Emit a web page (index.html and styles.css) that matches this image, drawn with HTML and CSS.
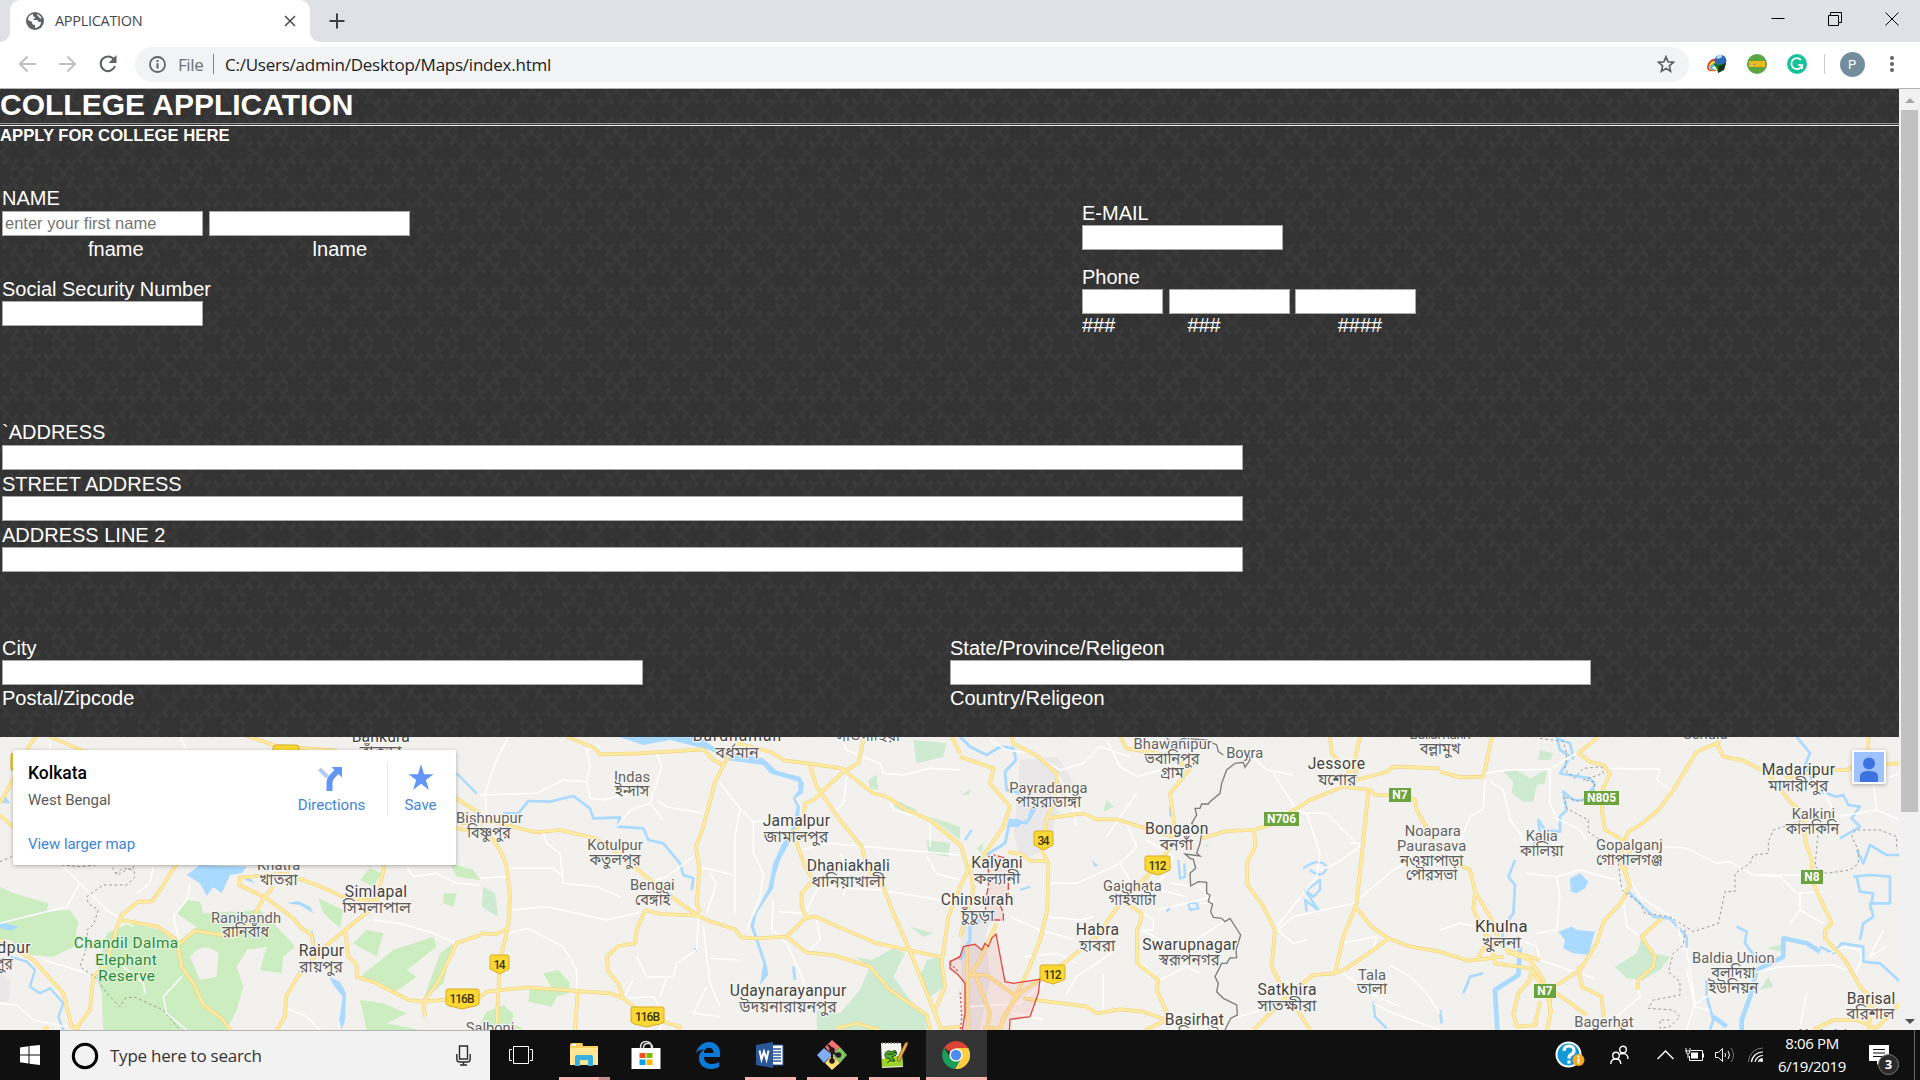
FILE: index.html
```html
<!DOCTYPE html>
<html lang="en">
<head>
<meta charset="utf-8">
<title>APPLICATION</title>
<link rel="stylesheet" href="styles.css">
</head>
<body>
<div class="screen">
<header class="tabstrip">
  <div class="tab">
    <svg class="globe" width="18" height="18" viewBox="0 0 18 18"><circle cx="9" cy="9" r="9" fill="#5f6368"/><path d="M2 8c0-3 2-5.500 5-6v2c0 1 2 0 2 2 0 1-2 1-2 2h4c1 0 1 2 2 2h2c0 3-3 6-6 6v-3c-2 0-3-1-3-3L2 8zM11 2c2 1 4 2 4.500 4-1 1-2 0-2.500-1s-2-1-2-3z" fill="#fff"/></svg>
    <span class="tab-title">APPLICATION</span>
    <svg width="12" height="12" viewBox="0 0 12 12"><path d="M1 1l10 10M11 1L1 11" stroke="#4b4f53" stroke-width="1.600"/></svg>
  </div>
  <svg class="newtab" width="16" height="16" viewBox="0 0 16 16"><path d="M8 .5v15M.5 8h15" stroke="#3c4043" stroke-width="2"/></svg>
  <div class="window-buttons">
    <svg width="14" height="14" viewBox="0 0 14 14"><path d="M.5 6.500h13" stroke="#000"/></svg>
    <svg width="14" height="14" viewBox="0 0 14 14"><path d="M.5 3.500h10v10H.5zM2.500 3V.5h11v10H11" fill="none" stroke="#000"/></svg>
    <svg width="14" height="14" viewBox="0 0 14 14"><path d="M.5 .5l13 13M13.500 .5l-13 13" stroke="#000"/></svg>
  </div>
</header>
<nav class="toolbar">
  <svg class="nav-icon" width="18" height="18" viewBox="0 0 18 18"><path d="M17 9H1M8.500 1.500L1 9l7.500 7.500" fill="none" stroke="#bdbfc1" stroke-width="2"/></svg>
  <svg class="nav-icon" width="18" height="18" viewBox="0 0 18 18"><path d="M0 9h16M8.500 1.500L16 9l-7.500 7.500" fill="none" stroke="#bdbfc1" stroke-width="2"/></svg>
  <svg class="nav-icon" width="18" height="18" viewBox="0 0 18 18"><path d="M15 4.500A7.300 7.300 0 1 0 16 11" fill="none" stroke="#5f6368" stroke-width="2.100"/><path d="M17.500 0v8h-8z" fill="#5f6368"/></svg>
  <div class="omnibox">
    <svg width="17" height="17" viewBox="0 0 17 17"><circle cx="8.500" cy="8.500" r="7.500" fill="none" stroke="#5f6368" stroke-width="1.800"/><path d="M8.500 7.300v5.200M8.500 4v2" stroke="#5f6368" stroke-width="2"/></svg>
    <span class="scheme">File</span><span class="scheme-rule"></span><span class="url">C:/Users/admin/Desktop/Maps/index.html</span>
    <svg class="star" width="18" height="18" viewBox="0 0 18 18"><path d="M9 1.800l2.100 5 5.400.5-4.100 3.600 1.200 5.300L9 13.400l-4.600 2.800 1.200-5.300L1.500 7.300l5.400-.5z" fill="none" stroke="#5f6368" stroke-width="1.700"/></svg>
  </div>
  <div class="extensions">
    <svg width="20" height="20" viewBox="0 0 20 20"><path d="M0 13C1 7 5 4 10 5l-1 12C4 18 0 17 0 13z" fill="#e23b2e"/><path d="M1.500 13C3 8 6 6 10 7l-1 9c-4 1-7 0-7.500-3z" fill="#f6dd3a"/><path d="M3 13.500c1-3 3-4 6-4l-1 6c-3 1-5 0-5-2z" fill="#5aa8e8"/><path d="M5 13.500q2-2 4-1.500v3q-3 1-4-1.500z" fill="#f4f4f4"/><circle cx="13.500" cy="6.800" r="6" fill="#2f68b5"/><path d="M9 4c1-3 4-4 6-3 1 2-3 5-6 3z" fill="#b6dbfa"/><path d="M6 9l7 2 6-2-2 6-6 4-1-4z" fill="#0b7d19"/><path d="M12 12l7-3-2 7-6 3z" fill="#15331a"/></svg>
    <svg width="20" height="20" viewBox="0 0 20 20"><circle cx="10" cy="10" r="10" fill="#5da443"/><path d="M2 7h16v6H2z" fill="#f1b719"/><path d="M4 11.500l4-2 1-1v2l-2 1zM16.500 7v6" fill="#7a5a20" stroke="#e7d8a0" stroke-width=".6"/></svg>
    <svg width="20" height="20" viewBox="0 0 20 20"><circle cx="10" cy="10" r="10" fill="#15c39a"/><path d="M14 6a5.500 5.500 0 1 0 1.200 5H11m4.200 0v4" fill="none" stroke="#fff" stroke-width="1.700"/></svg>
    <span class="ext-rule"></span>
    <span class="avatar">P</span>
    <svg width="4" height="18" viewBox="0 0 4 18"><g fill="#5f6368"><circle cx="2" cy="3" r="2"/><circle cx="2" cy="9" r="2"/><circle cx="2" cy="15" r="2"/></g></svg>
  </div>
</nav>
<div class="viewport">
<main class="page">
  <h1 class="title">COLLEGE APPLICATION</h1>
  <hr class="rule">
  <h5 class="subtitle">APPLY FOR COLLEGE HERE</h5>
  <section class="personal">
    <div class="identity">
      <label class="label raised">NAME</label>
      <div class="fields name-fields"><input class="w-std" placeholder="enter your first name"><input class="w-std"></div>
      <div class="hints name-hints"><span>fname</span><span>lname</span></div>
      <label class="label ssn">Social Security Number</label>
      <div class="fields"><input class="w-std"></div>
    </div>
    <div class="contact">
      <label class="label">E-MAIL</label>
      <div class="fields"><input class="w-std"></div>
      <label class="label phone">Phone</label>
      <div class="fields phone-fields"><input class="w-area"><input class="w-part"><input class="w-part"></div>
      <div class="hints phone-hints"><span>###</span><span>###</span><span>####</span></div>
    </div>
  </section>
  <section class="address">
    <label class="label">`ADDRESS</label><input class="w-line">
    <label class="label spaced">STREET ADDRESS</label><input class="w-line">
    <label class="label spaced">ADDRESS LINE 2</label><input class="w-line">
  </section>
  <section class="region">
    <div class="region-col"><label class="label">City</label><input class="w-half"><label class="label after">Postal/Zipcode</label></div>
    <div class="region-col"><label class="label">State/Province/Religeon</label><input class="w-half"><label class="label after">Country/Religeon</label></div>
  </section>
  <section class="map">
  <svg class="map-canvas" width="1899" height="293" viewBox="0 737 1899 293">
    <defs>
      <g id="roads">
        <g transform="translate(0 730) scale(.33333)">
          <path d="M150 20L290 80M115 10Q80 50 60 110L0 220M0 255L50 300M690 0L830 48L1010 62M530 400L487 470L455 515L415 515L365 555L345 610L320 700L280 740L270 840L225 900M362 570L475 590L530 630L545 710L580 760L610 825L665 865L690 900M530 650L585 602L665 615L750 580L790 505L820 470M870 430L720 443L718 465L800 505L880 565L900 590L935 615L940 645M880 440L950 465L1040 505L1130 512L1155 400M1110 540L1035 600L975 650L905 720L858 800L855 860L830 900M1035 600L1045 680L1070 705L1070 740L1130 760L1225 810L1270 815L1440 800M1275 860L1270 815L1315 755L1370 640L1440 615M0 630L100 690L190 790L215 890L240 895M130 900L145 890M1360 200L1440 250M1350 290L1440 310"/>
        </g>
        <g transform="translate(480 730) scale(.33333)">
          <path d="M260 20L340 52L360 73L480 70L670 58L700 90L730 105M750 70L705 155L670 290L648 350L658 420L650 520L660 548M0 290Q60 340 80 410L90 500L85 590L60 690L50 880M-60 280L40 275L165 307L240 300L345 325L400 360L480 425L560 490L650 555L685 572L765 598L785 622L830 625L920 620L975 565L1005 560L1190 640L1385 682M495 540L540 552L660 557M495 540L470 600L465 640L415 648L380 680L385 725L415 760L430 805L390 790L140 772L20 785L-10 810M430 805L500 860L600 890L595 900M0 610L50 612L85 595M293 785L285 900M770 40L870 65L915 92L985 100L1085 115L1180 190L1220 200L1280 240L1350 270L1440 345M1150 30L1135 100L1090 125L1000 210L975 220L970 270L940 310L975 410L1000 450L965 490L965 530L980 565M990 105L1010 170L1080 270L1145 350L1165 420L1210 470L1240 550L1280 640L1325 750L1385 900M920 620L980 668L1060 675L1170 710L1230 780L1340 855L1350 900M1415 20L1440 70M1070 895L1130 880L1200 900M1440 470L1405 560L1385 700L1395 770L1365 840M1385 895L1440 890"/>
        </g>
        <g transform="translate(960 730) scale(.33333)">
          <path d="M0 80L100 115L90 160L150 230L130 290L75 370L25 420L0 340M155 20L160 40L235 80L290 130L290 180L260 270L245 360L265 400L262 540L240 630L205 720L150 830L115 900M260 265L370 250L410 268L470 268L555 295L640 320M145 365L190 375L210 393L260 393M480 20L500 55L620 75L690 115L630 190L645 300M640 340L570 430L480 520L410 620L305 705M500 520L545 550L540 580L530 600L532 700L595 750L590 780L630 870M190 805L380 830L410 850L480 838L550 845L620 870L555 900M310 700L180 790L130 860L120 900M725 325L800 303L880 300L930 285L1050 210L1150 170L1230 180L1245 195L1330 195L1365 210L1370 240L1420 330M1110 20L1115 70L1190 150M1200 20L1185 85L1190 150L1280 125L1300 110L1440 115M1225 185L1190 520L1150 620L1125 730L1060 735L1000 780L940 840L880 900M1000 820L1050 900M1125 730L1160 715L1240 660L1285 625L1350 650L1440 665M1185 530L1235 590L1285 625M883 300L885 350L860 400L862 465L910 530L945 600L935 710L990 820M0 470L30 410L40 480L0 620M110 580L60 690L40 720L90 850L80 900M20 650L25 900M20 735L80 735L170 800M70 895L120 895"/>
        </g>
        <g transform="translate(1440 730) scale(.33333)">
          <path d="M0 125L60 142L130 140L140 95L155 20M475 20L415 70L450 95L490 105L510 130L490 175L485 240L495 300L550 330L540 390L570 465L545 515L490 575L470 640L420 720L350 765M555 330L565 305L600 285L655 240L700 180L770 65L830 40L850 80L910 92L985 130L1050 215L1090 250L1095 330L1115 390L1115 450L1175 580L1155 600L1155 625L1215 690L1260 770L1300 810L1285 900M835 20L835 45M1035 145L1150 120L1220 120L1245 105L1380 100M1285 20L1285 80M0 375L90 420L105 485L100 540L140 620M105 485L150 560L180 640L200 660L300 690M0 665L85 692L190 680M110 690L150 620L165 700L270 715L330 800L330 860L320 900M200 665L270 690L310 750L335 850M275 720L270 750L235 790L220 850L230 890L285 885L300 815M415 710L425 770L485 800L490 860M350 790L440 855M665 565L605 620L645 680L640 710L595 750L592 780M570 360L555 420L570 465M1300 815L1260 870L1180 870L1120 900M1250 870L1310 895L1380 820"/>
        </g>
      </g>
    </defs>
    <rect y="737" width="1899" height="293" fill="#f3f1ed"/>
    <g fill="#cbedc0">
      <g transform="translate(0 730) scale(.33333)">
        <path d="M0 470L40 490L145 520L140 545L210 540L235 575L220 650L160 680L90 675L30 630L0 630zM290 740L320 610L390 580L480 600L530 640L590 590L530 550L560 510L600 515L610 550L780 540L860 620L885 650L850 680L845 730L780 720L800 650L740 660L710 710L730 770L710 840L680 900L310 900L305 790z"/>
        <path d="M570 680Q610 630 655 670L650 740L600 750z" fill="#f3f1ed"/>
        <path d="M955 505L1030 540L1020 595L970 550zM1080 450L1110 415L1145 430L1120 470zM1330 490L1370 490L1360 530L1330 520zM1350 400L1420 420L1440 450L1370 440zM1100 600L1150 610L1130 680L1060 640zM1180 660L1300 620L1310 650L1220 720L1250 740L1180 790L1080 740zM1080 810L1150 820L1220 850L1160 880L1260 900L1100 900zM1320 670L1360 640L1330 760L1270 810z"/>
      </g>
      <g transform="translate(480 730) scale(.33333)"><path d="M190 730L235 720L270 760L265 790L230 800L215 830L145 815L150 780L215 775zM20 845L70 825L100 850L95 880L135 900L0 880z"/><path d="M10 470L45 490L55 560L5 530zM1300 30L1400 40L1390 80L1310 100zM1165 150L1190 135L1195 180L1170 175zM1260 215L1310 240L1300 255L1240 230zM1350 260L1440 290L1440 330zM1340 330L1410 340L1405 380L1345 370zM1125 680L1175 690L1240 655L1275 670L1240 740L1290 810L1340 860L1340 900L1010 900L1010 840L1080 850L1140 780L1170 710zM1340 690L1385 680L1395 770L1350 800L1320 740zM1290 590L1360 610L1330 620z" fill="#ceead0"/></g>
      <g transform="translate(960 730) scale(.33333)" fill="#ceead0"><path d="M430 245L440 210L462 230zM275 240L300 245L270 260zM5 195L35 175L25 195zM290 135L330 165L290 160zM190 300L225 270L220 310zM50 355L70 340L65 370zM735 340L748 350L738 352z"/></g>
      <g transform="translate(1440 730) scale(.33333)" fill="#ceead0"><path d="M190 125L230 120L270 145L320 120L315 160L290 165L280 215L250 215L215 190L220 155zM300 60L340 70L330 90L295 90zM525 710L590 670L605 625L640 670L690 680L660 720L610 750L560 745zM960 780L985 740L1000 770zM980 655L1035 640L1020 665z"/></g>
    </g>
    <g fill="#e9e7e7"><path d="M1020 760l38-3 15 25-15 20-8 45-30 15-6-28zM960 900l25 20 5 60-10 50h-18zM0 972l10 10-2 20H0zM975 915l20-5-10 25-15 5z"/></g>
    <g fill="#aadaff">
      <g transform="translate(0 730) scale(.33333)"><path d="M560 435L600 405L740 410L725 430L690 435L665 490L640 470L620 497L600 460zM5 220L15 195L30 220zM0 595L0 575L55 590L35 602zM740 435L765 460L735 450zM860 520L895 513L930 530L940 550L900 525zM987 740L1020 755L1038 790L1035 870L1025 900L1018 870L1028 800L1000 765zM935 595L945 630L945 660L935 640z"/></g>
      <g transform="translate(480 730) scale(.33333)"><path d="M415 20L660 22L700 50L790 75L850 85L890 122L960 140L972 160L968 190L945 205L960 230L955 285L925 345L900 390L885 440L880 475L830 550L822 590L860 705L865 735L840 765L850 700L812 590L815 570L865 475L880 400L905 345L940 285L950 230L938 205L955 180L955 155L870 130L850 105L740 90L690 60L570 30L490 45z"/></g>
      <g transform="translate(1440 730) scale(.33333)"><path d="M390 445L420 430L445 455L435 475L410 490L393 485zM355 605L395 590L410 600L465 605L445 675L400 670L370 655L375 630z"/></g>
    </g>
    <g fill="none" stroke="#aadaff" stroke-linejoin="round">
      <g transform="translate(0 730) scale(.33333)"><path stroke-width="7" d="M30 680L80 695L105 720L90 770L120 790L150 775L190 820L175 860L190 900M1370 130L1430 190"/></g>
      <g transform="translate(480 730) scale(.33333)"><path stroke-width="8" d="M70 250L115 250L145 213L210 215L280 198L330 235L340 265L420 262L412 290L490 295L505 330L550 340L600 400L610 435L640 445L635 480M940 710L945 750M645 655L650 665"/></g>
      <g transform="translate(960 730) scale(.33333)"><path stroke-width="9" d="M0 20L30 50L80 75L120 50L160 55L168 90L135 125L140 180L185 190M240 210L200 280L150 270L135 340L80 375"/><path fill="#aadaff" stroke="none" d="M145 290L165 265L195 275L215 230L225 235L175 292zM395 390L415 408L405 410z"/><path stroke-width="10" d="M60 570L30 590L30 630L0 690"/><path stroke-width="7" d="M655 390L660 445L675 440L673 400M685 518L710 520L715 535L690 540L685 520M630 230L632 260M1030 415Q1080 380 1100 410Q1090 450 1050 420M1040 480L1080 450L1080 480L1060 500L1035 480L1075 540L1035 510L1040 545M1240 815L1245 860L1280 895M180 480L210 470M620 545L632 528M15 330L35 300"/></g>
      <g transform="translate(1440 730) scale(.33333)"><path stroke-width="8" d="M350 20L360 60L400 85L390 40L350 25M385 90L360 130L450 145L465 165L430 210L400 210L370 185L380 240L360 260L360 305L315 300L295 270L300 310L270 360M225 390L205 440L225 465L220 550L190 590L185 650M560 480L600 520L640 560L690 565L740 620L740 655M1070 20L1110 70L1095 105L1130 180L1190 200L1210 195L1225 225L1260 230L1235 265L1260 290L1200 325M1380 375L1340 375L1290 345L1270 400L1250 360M1240 440L1290 435L1350 440L1350 520L1290 520L1300 560L1270 580L1260 630M1250 440L1260 485L1300 490L1290 540M890 590L920 605L915 640L960 700M810 900L820 870L800 800L800 750M1140 650L1180 670L1205 640L1270 650L1270 695L1320 700L1380 755M5 880L0 840M130 730L90 740L70 790"/><path stroke-width="14" d="M240 650L235 735L165 780L172 900M1140 665L1100 640L1030 625L1030 680L950 720L930 800L905 870L905 900M820 860L860 890"/></g>
    </g>
    <g fill="none" stroke="#fff" stroke-width="4.500" stroke-linejoin="round">
      <g transform="translate(0 730) scale(.33333)"><path d="M190 410L240 460L200 530L120 550L0 580M240 460L320 540L400 590M570 460L560 510L520 560L540 640M460 410L450 460L410 490M1220 410L1240 440L1310 430L1370 460L1440 465M1120 570L1200 580L1300 610L1370 640M130 690L200 710L290 740M0 820L50 825L100 870L200 890M850 830L920 860L960 900M560 900L500 850L490 800L545 740M370 710L430 760L435 790M540 20L560 60M150 30L150 60"/></g>
      <g transform="translate(480 730) scale(.33333)"><path d="M85 20L50 90L40 120L15 190L20 250M0 195L170 190L250 150L320 155L330 110L320 60L360 50M320 155L330 205L370 210L450 190M530 70L545 110L510 220L550 270M510 220L450 240L410 290M530 210L560 230L670 250M720 160L780 235L820 275L940 270M780 235L765 320L765 550M820 275L820 370L850 430L840 500L800 600M190 310L200 340L240 370L250 460L350 470L420 500M80 415L220 415L250 440M0 445L80 440M90 540L200 530L270 545L380 570L490 545M85 610L145 595L250 650L290 720L290 780M640 380L560 440L500 460M660 410L760 435M690 430L710 460L680 550M670 590L690 760L720 830M655 560L650 660L590 700L580 740L500 740L470 680M690 685L780 690M880 510L875 600L920 640L970 750L980 830M895 545L975 550L1000 500L1020 470L1200 480L1440 520M960 360L1050 340L1160 350L1440 375M1220 190L1240 240L1350 270L1350 350M1080 20L1100 60L1200 100L1210 130L1270 135L1350 115L1440 120M1100 140L1090 220L1060 250M1440 450L1370 430L1340 380M1080 370L1110 410L1090 500M1010 565L1020 630L980 670M460 750L430 805M540 800L560 740M440 805L520 800L550 850L540 900M680 770L640 850L720 860"/></g>
      <g transform="translate(960 730) scale(.33333)"><path d="M90 30L140 60L220 70L300 120L370 100L420 50L510 80M290 130L330 200L350 290M290 190L390 270M440 30L480 110L530 140L640 110M530 190L460 290L440 320M500 280L530 350L480 400L350 460L260 460M480 400L510 450M560 330L640 380L610 440L550 490L520 510M630 460L720 470L760 520L720 520M600 480L680 500M545 545L580 570L580 600L545 600L600 630L690 640L800 570M590 540L760 500M260 560L360 570L400 560M150 560L240 600L350 630M480 650L410 700L350 740L320 790M430 730L430 850M545 700L600 750L680 710L720 730M870 70L920 120L1000 135M940 130L1010 240L1040 250L1080 370L1070 440L950 590M1010 250L1100 250L1200 350L1130 400L1080 420M1200 340L1170 340M940 610L1000 560L1180 520L1300 420L1370 380M940 590L1000 640L1040 630M1150 730L1230 790L1320 830M1240 820L1300 850L1440 900M1240 660L1250 620L1140 640M1290 705L1350 740L1400 790L1440 850M30 830L180 820L250 760M190 680L290 670L350 700M160 850L250 870M800 870L940 830"/></g>
      <g transform="translate(1440 730) scale(.33333)"><path d="M0 20L65 35M135 150L130 235L90 260L55 350M150 155L190 180L210 270L240 310L260 370M135 130L200 120L330 118L400 75L430 60M330 120L330 220L350 265L420 300L440 330M500 115L660 118L650 150L700 185M670 350L740 355L830 400L870 395L940 435L1080 435L1120 410M560 430L600 500L660 540L710 570L730 655L740 655L765 820L740 900M550 510L560 590L600 620M260 430L350 440L420 420L530 450L550 490M350 440L360 500L350 600L290 610M240 630L290 650L300 690L460 745M0 600L60 580L120 590M940 435L1020 440L1070 490L1150 485M1080 490L1080 540L1150 580M1080 540L1050 580M770 820L890 740L1020 710L1180 705L1220 720M1100 790L1080 890M1170 670L1210 650L1260 660L1265 690L1245 730M740 720L765 830L810 840M590 750L600 800L530 860M1120 120L1190 260L1310 240L1380 270M1310 240L1300 160L1380 130M1330 600L1290 680L1340 650"/></g>
    </g>
    <use href="#roads" class="road-edge"/>
    <use href="#roads" class="road-fill"/>
    <g fill="none" stroke="#9a9a9a" stroke-width="3" stroke-dasharray="8 8">
      <path transform="translate(0 730) scale(.33333)" d="M0 395L35 380M185 405L240 410L330 400L350 435L400 410L405 440L380 465L310 465L260 500L265 520L295 540L280 585L260 600L265 640L240 710L290 745L320 790L360 830L375 805L400 800L490 840L535 895M345 430L370 415L400 420"/>
      <path transform="translate(1440 730) scale(.33333)" d="M300 25L370 35L380 70L375 120L405 145L430 115L485 110L490 130L430 150L465 155L460 190L420 215L370 200L380 235L445 270L445 305L480 330M535 400L545 480L600 520L615 550L690 560L760 605L835 580L855 485L885 485L885 430L930 400L940 375L985 370L985 335L1000 300L1090 270M1135 300L1125 410L1160 430L1230 420L1255 400L1255 360L1235 320L1245 300L1320 300L1370 320L1370 360M735 600L730 645L700 670L685 725L720 755L720 795L640 810L625 835L700 840L720 860L690 890L660 895L660 870L690 870"/>
    </g>
    <path transform="translate(960 730) scale(.33333)" d="M620 25L640 40L670 25L740 30L770 45L775 65L790 75M865 60L870 90L855 112L850 97L825 100L800 120L785 160L780 190L750 215L745 222L725 222L720 235L705 235L710 255L695 280L725 310L720 340L710 370L720 378L675 372L690 385L700 388L707 415L690 430L692 468L715 455L740 457L740 490L750 495L745 515L758 522L752 545L760 562L785 565L795 575L810 565L842 615L828 660L830 683L810 684L800 700L785 700L765 740L775 760L770 785L790 805L830 825L832 855L812 865L795 900" fill="none" stroke="#7d7d7d" stroke-width="4"/>
    <g transform="translate(960 730) scale(.33333)" stroke="#e34a41" stroke-width="4" fill="#e5534b" fill-opacity=".1">
      <path d="M85 380L105 375L150 390L165 430L145 460L145 500L115 510L130 550L130 570L80 570L75 520L85 470z" stroke-dasharray="22 7"/>
      <path d="M-30 695L0 680L10 650L45 643L65 660L75 640L85 650L95 625L108 612L135 755L160 760L240 748L235 790L210 860L150 868L148 910L5 910L15 850L15 760L-5 735L-30 715z"/>
      <path d="M-30 695L0 680M-30 700L-5 725M0 910L5 860L0 780" stroke-dasharray="6 7" fill="none"/>
    </g>
    <g class="place" transform="translate(0 730) scale(.33333)">
      <text class="town" x="1142" y="36" textLength="174">Bankura</text><text class="bn" x="1142" y="80" textLength="125" lengthAdjust="spacingAndGlyphs">বাঁকুড়া</text>
      <text class="minor" x="836" y="421" textLength="130">Khatra</text><text class="bn" x="835" y="464" textLength="115" lengthAdjust="spacingAndGlyphs">খাতরা</text>
      <text class="town" x="1128" y="501" textLength="187">Simlapal</text><text class="bn" x="1130" y="548" textLength="205" lengthAdjust="spacingAndGlyphs">সিমলাপাল</text>
      <text class="minor" x="738" y="578" textLength="210">Ranibandh</text><text class="bn" x="737" y="622" textLength="140" lengthAdjust="spacingAndGlyphs">রানিবাঁধ</text>
      <g class="park"><text x="378" y="654" textLength="313">Chandil Dalma</text><text x="378" y="704" textLength="184">Elephant</text><text x="380" y="753" textLength="170">Reserve</text></g>
      <text class="town" x="964" y="678" textLength="136">Raipur</text><text class="bn" x="963" y="725" textLength="130" lengthAdjust="spacingAndGlyphs">রায়পুর</text>
      <text class="town" x="42" y="668" textLength="100">dpur</text><text class="bn" x="0" y="718" textLength="76" lengthAdjust="spacingAndGlyphs">দপুর</text>
      <text class="minor" x="1468" y="280" textLength="200">Bishnupur</text><text class="bn" x="1467" y="324" textLength="130" lengthAdjust="spacingAndGlyphs">বিষ্ণুপুর</text>
      <text class="minor" x="1470" y="908" textLength="146">Salboni</text>
    </g>
    <g class="place" transform="translate(480 730) scale(.33333)">
      <text class="town" x="771" y="34" textLength="265">Bardhaman</text><text class="bn" x="771" y="83" textLength="130" lengthAdjust="spacingAndGlyphs">বর্ধমান</text>
      <text class="bn" x="1165" y="34" textLength="190" lengthAdjust="spacingAndGlyphs">সাতগাছিয়া</text>
      <text class="minor" x="456" y="157" textLength="108">Indas</text><text class="bn" x="456" y="199" textLength="103" lengthAdjust="spacingAndGlyphs">ইন্দাস</text>
      <text class="minor" x="405" y="361" textLength="166">Kotulpur</text><text class="bn" x="405" y="405" textLength="153" lengthAdjust="spacingAndGlyphs">কতুলপুর</text>
      <text class="minor" x="517" y="479" textLength="134">Bengai</text><text class="bn" x="518" y="524" textLength="106" lengthAdjust="spacingAndGlyphs">বেঙ্গাই</text>
      <text class="town" x="949" y="288" textLength="202">Jamalpur</text><text class="bn" x="948" y="335" textLength="194" lengthAdjust="spacingAndGlyphs">জামালপুর</text>
      <text class="town" x="1105" y="424" textLength="249">Dhaniakhali</text><text class="bn" x="1105" y="472" textLength="222" lengthAdjust="spacingAndGlyphs">ধানিয়াখালী</text>
      <text class="town" x="924" y="798" textLength="350">Udaynarayanpur</text><text class="bn" x="924" y="846" textLength="292" lengthAdjust="spacingAndGlyphs">উদয়নারায়নপুর</text>
    </g>
    <g class="place" transform="translate(960 730) scale(.33333)">
      <text class="minor" x="638" y="57" textLength="235">Bhawanipur</text><text class="bn" x="636" y="101" textLength="165" lengthAdjust="spacingAndGlyphs">ভবানিপুর</text><text class="bn" x="636" y="145" textLength="70" lengthAdjust="spacingAndGlyphs">গ্রাম</text>
      <text class="minor" x="854" y="83" textLength="111">Boyra</text>
      <text class="minor" x="265" y="188" textLength="235">Payradanga</text><text class="bn" x="265" y="232" textLength="197" lengthAdjust="spacingAndGlyphs">পায়রাডাঙ্গা</text>
      <text class="town" x="1129" y="116" textLength="172">Jessore</text><text class="bn" x="1131" y="164" textLength="116" lengthAdjust="spacingAndGlyphs">যশোর</text>
      <text class="town" x="650" y="312" textLength="190">Bongaon</text><text class="bn" x="649" y="360" textLength="100" lengthAdjust="spacingAndGlyphs">বনগাঁ</text>
      <text class="town" x="111" y="415" textLength="154">Kalyani</text><text class="bn" x="111" y="463" textLength="140" lengthAdjust="spacingAndGlyphs">কল্যানী</text>
      <text class="town" x="51" y="525" textLength="218">Chinsurah</text><text class="bn" x="53" y="573" textLength="100" lengthAdjust="spacingAndGlyphs">চুঁচুড়া</text>
      <text class="minor" x="517" y="483" textLength="176">Gaighata</text><text class="bn" x="517" y="526" textLength="143" lengthAdjust="spacingAndGlyphs">গাইঘাটা</text>
      <text class="town" x="412" y="615" textLength="130">Habra</text><text class="bn" x="412" y="662" textLength="108" lengthAdjust="spacingAndGlyphs">হাবরা</text>
      <text class="town" x="689" y="659" textLength="285">Swarupnagar</text><text class="bn" x="688" y="706" textLength="182" lengthAdjust="spacingAndGlyphs">স্বরূপনগর</text>
      <text class="town" x="981" y="795" textLength="177">Satkhira</text><text class="bn" x="981" y="843" textLength="177" lengthAdjust="spacingAndGlyphs">সাতক্ষীরা</text>
      <text class="minor" x="1236" y="749" textLength="84">Tala</text><text class="bn" x="1236" y="793" textLength="90" lengthAdjust="spacingAndGlyphs">তালা</text>
      <text class="town" x="703" y="885" textLength="178">Basirhat</text><text class="bn" x="703" y="930" textLength="150" lengthAdjust="spacingAndGlyphs">বসিরহাট</text>
      <text class="minor" x="1418" y="317" textLength="168">Noapara</text><text class="minor" x="1415" y="363" textLength="208">Paurasava</text><text class="bn" x="1415" y="407" textLength="190" lengthAdjust="spacingAndGlyphs">নওয়াপাড়া</text><text class="bn" x="1415" y="451" textLength="155" lengthAdjust="spacingAndGlyphs">পৌরসভা</text>
      <text class="minor" x="1440" y="26" textLength="185">Bollamukh</text><text class="bn" x="1440" y="73" textLength="122" lengthAdjust="spacingAndGlyphs">বল্লামুখ</text>
    </g>
    <g class="place" transform="translate(1440 730) scale(.33333)">
      <text class="minor" x="796" y="27" textLength="134">Sendia</text>
      <text class="town" x="1075" y="134" textLength="220">Madaripur</text><text class="bn" x="1075" y="182" textLength="180" lengthAdjust="spacingAndGlyphs">মাদারীপুর</text>
      <text class="minor" x="1120" y="268" textLength="130">Kalkini</text><text class="bn" x="1117" y="312" textLength="160" lengthAdjust="spacingAndGlyphs">কালকিনি</text>
      <text class="minor" x="305" y="334" textLength="96">Kalia</text><text class="bn" x="305" y="377" textLength="130" lengthAdjust="spacingAndGlyphs">কালিয়া</text>
      <text class="minor" x="568" y="361" textLength="200">Gopalganj</text><text class="bn" x="568" y="404" textLength="200" lengthAdjust="spacingAndGlyphs">গোপালগঞ্জ</text>
      <text class="big" x="184" y="605" textLength="158">Khulna</text><text class="bn" x="184" y="655" textLength="118" lengthAdjust="spacingAndGlyphs">খুলনা</text>
      <text class="minor" x="880" y="700" textLength="248">Baldia Union</text><text class="bn" x="880" y="744" textLength="132" lengthAdjust="spacingAndGlyphs">বলদিয়া</text><text class="bn" x="880" y="788" textLength="150" lengthAdjust="spacingAndGlyphs">ইউনিয়ন</text>
      <text class="town" x="1293" y="822" textLength="146">Barisal</text><text class="bn" x="1291" y="868" textLength="145" lengthAdjust="spacingAndGlyphs">বরিশাল</text>
      <text class="minor" x="492" y="891" textLength="178">Bagerhat</text><text class="bn" x="492" y="936" textLength="140" lengthAdjust="spacingAndGlyphs">বাগেরহাট</text>
      <text class="minor" x="1170" y="930" textLength="190">Nalchity</text>
    </g>
    <g class="shield">
      <rect x="273" y="745" width="26" height="20" rx="3"/><rect x="11" y="753" width="22" height="18" rx="3"/>
      <path d="M448 989h29a2 2 0 0 1 2 2v13q-4 3-9 3l-8 2-8-2q-5 0-8-3v-13a2 2 0 0 1 2-2z"/><text x="462" y="1003" textLength="25">116B</text>
      <path d="M492 955h15a2 2 0 0 1 2 2v12l-9.500 5-9.500-5v-12a2 2 0 0 1 2-2z"/><text x="499.500" y="969" textLength="12">14</text>
      <path d="M633 1007h29a2 2 0 0 1 2 2v13q-4 3-9 3l-8 2-8-2q-5 0-8-3v-13a2 2 0 0 1 2-2z"/><text x="647.500" y="1021" textLength="25">116B</text>
      <path d="M1036 831h15a2 2 0 0 1 2 2v12l-9.500 5-9.500-5v-12a2 2 0 0 1 2-2z"/><text x="1043.500" y="845" textLength="12">34</text>
      <path d="M1147 856h21a2 2 0 0 1 2 2v12q-5 3-12 5-8-2-13-5v-12a2 2 0 0 1 2-2z"/><text x="1157.500" y="870" textLength="18">112</text>
      <path d="M1042 965h21a2 2 0 0 1 2 2v12q-5 3-12 5-8-2-13-5v-12a2 2 0 0 1 2-2z"/><text x="1052.500" y="979" textLength="18">112</text>
    </g>
    <g class="national">
      <rect x="1389" y="788" width="22" height="14"/><text x="1400" y="799">N7</text>
      <rect x="1264" y="812" width="35" height="14"/><text x="1281.500" y="823">N706</text>
      <rect x="1584" y="791" width="35" height="14"/><text x="1601.500" y="802">N805</text>
      <rect x="1801" y="870" width="22" height="14"/><text x="1812" y="881">N8</text>
      <rect x="1534" y="984" width="22" height="14"/><text x="1545" y="995">N7</text>
    </g>
  </svg>
  <aside class="place-card">
    <div class="place-info"><strong class="place-name">Kolkata</strong><span class="place-region">West Bengal</span><a class="map-link larger">View larger map</a></div>
    <div class="card-action directions">
      <svg width="24" height="24" viewBox="0 0 24 24"><path d="M3 .5l8 8-3 3-8-8z" fill="#b3cbfb"/><path d="M13.500 0H24v10.500l-3.500-3.500q-6 5-6 9v8h-6v-9q0-5 8-12z" fill="#6394f8"/></svg>
      <a class="map-link">Directions</a></div>
    <div class="card-action save">
      <svg width="26" height="27" viewBox="0 0 26 27"><path d="M13 0l3 10.200h9.500L17.800 16l3.200 10-8-6.200L5 26l3.200-10L.5 10.200H10z" fill="#6394f8"/></svg>
      <a class="map-link">Save</a></div>
  </aside>
  <div class="profile"><svg width="30" height="30" viewBox="0 0 30 30"><rect width="30" height="30" fill="#a0c3ff"/><circle cx="15" cy="11.500" r="6" fill="#3d73e0"/><path d="M6 30v-6q0-5 9-5t9 5v6z" fill="#3d73e0"/></svg></div>
  </section>
</main>
<div class="scrollbar"><i class="arrow-up"></i><i class="thumb"></i><i class="arrow-down"></i></div>
</div>
<footer class="taskbar">
  <div class="start"><svg width="20" height="20" viewBox="0 0 20 20"><path d="M0 2.500l8.500-1.300v8.300H0zM9.500 1L20 0v9.500H9.500zM0 10.500h8.500v8L0 17.300zM9.500 10.500H20V20l-10.500-1.300z" fill="#fff"/></svg></div>
  <div class="search">
    <svg width="28" height="28" viewBox="0 0 28 28"><circle cx="14" cy="14" r="11.700" fill="none" stroke="#000" stroke-width="3"/></svg>
    <span class="search-text">Type here to search</span>
    <svg class="mic" width="15" height="21" viewBox="0 0 15 21"><path d="M3.500 1h8v13h-8zM.8 9v5q0 3 3 3h7.400q3 0 3-3V9M7.500 17v3M4 20h7" fill="none" stroke="#2b2b2b" stroke-width="1.400"/></svg>
  </div>
  <div class="apps">
    <div class="app task-view"><svg width="24" height="18" viewBox="0 0 24 18"><path d="M4.500 .5h15v17h-15zM3 3.500H.5v11H3M21 3.500h2.500v11H21" fill="none" stroke="#fff"/></svg></div>
    <div class="app open grouped"><svg width="28" height="24" viewBox="0 0 28 24"><path d="M0 2q0-2 2-2h10q1 0 1 3h15v19H0z" fill="#f7cf5f"/><path d="M2 1h4v2H2z" fill="#fff"/><path d="M0 5h28v17H0z" fill="#ffe694"/><path d="M5 23V14q0-2 2-2h14q2 0 2 2v9h-5v-6h-8v6z" fill="#3aafe2"/></svg></div>
    <div class="app"><svg width="30" height="30" viewBox="0 0 30 30"><path d="M9.500 8q0-6.500 5.500-6.500T20.500 8M12.500 8q0-5 5-4.500 4 0 4 4.500" fill="none" stroke="#ddd" stroke-width="1.500"/><path d="M.5 8h29v21h-29z" fill="#fff"/><path d="M8.500 13h6v5h-6z" fill="#f25022"/><path d="M15.500 13h6v5h-6z" fill="#7fba00"/><path d="M8.500 19.500h6v5.500h-6z" fill="#00a4ef"/><path d="M15.500 19.500h6v5.500h-6z" fill="#ffb900"/></svg></div>
    <div class="app"><svg width="26" height="28" viewBox="0 0 26 28"><path d="M1 12C3 5 8 1 14 1c8 0 11 6 11 11v4H9c0 5 4 7 8 7 3 0 5-1 7-2v5c-2 1-5 2-8 2C9 28 4 24 4 17c0-4 2-7 5-8.500C6 8.500 3 9.500 1 12zM9 12h9.500c0-3-1-5-4.500-5s-5 2-5 5z" fill="#0c7ad8"/></svg></div>
    <div class="app open"><svg width="28" height="28" viewBox="0 0 28 28"><path d="M14 4h13v20H14z" fill="#fff" stroke="#2b5797"/><path d="M16 8h9M16 11h9M16 14h9M16 17h9M16 20h9" stroke="#2b5797" stroke-width="1.400"/><path d="M0 4l17-3v26L0 24z" fill="#2b5797"/><path d="M3.500 9.500l2 9 2.500-8 2.500 8 2-9" fill="none" stroke="#fff" stroke-width="2"/></svg></div>
    <div class="app open"><svg width="30" height="30" viewBox="0 0 30 30"><path d="M15 0l8 7-8 8-7-8z" fill="#f37172"/><path d="M7 8l8 7-8 8-7-8z" fill="#7faef5"/><path d="M23 7l7 8-7 8-8-8z" fill="#81c564"/><path d="M15 15l8 8-8 7-7-7z" fill="#ffdf76"/><path d="M11 5l4 4v13M15 9q1 5 6 6" fill="none" stroke="#201a18" stroke-width="2"/><g fill="#201a18"><circle cx="15" cy="10" r="2.800"/><circle cx="15" cy="21" r="2.800"/><circle cx="21.500" cy="15" r="2.800"/></g></svg></div>
    <div class="app open"><svg width="30" height="28" viewBox="0 0 30 28"><path d="M2 2h20l2 24-21 1z" fill="#f4f4ee"/><path d="M3 18l20-4 1 11-21 1z" fill="#9cd42b"/><path d="M3 2h18" stroke="#777" stroke-width="2" stroke-dasharray="1 2"/><path d="M6 14c0-4 4-5 7-3 2-3 6-1 4 3l-4 2 3 4h-4l-2-3c-2 1-4 0-4-3z" fill="#57b32c" stroke="#163f15"/><path d="M8 13h6M8 22l4-3M17 11l-3 1" stroke="#173815"/><path d="M18 19L26 2l3-1-1 4-8 16z" fill="#eeb43c" stroke="#754915" stroke-width=".7"/></svg></div>
    <div class="app open active"><svg width="28" height="28" viewBox="0 0 28 28"><path d="M14 14L2 7A14 14 0 0 1 26.200 7z" fill="#dc4437"/><path d="M14 14L26.200 7A14 14 0 0 1 13 28l6-11z" fill="#ffcd40"/><path d="M14 14l5.500 3L13 28A14 14 0 0 1 2 7l6.500 10z" fill="#1a9e5c"/><path d="M14 7h12.200L19 17z" fill="#ffcd40"/><path d="M2 7h12v3z" fill="#dc4437"/><circle cx="14" cy="14" r="6.600" fill="#fff"/><circle cx="14" cy="14" r="5.200" fill="#4c8bf5"/></svg></div>
  </div>
  <div class="tray">
    <svg class="help" width="30" height="28" viewBox="0 0 30 28"><circle cx="13.500" cy="13.500" r="13" fill="#fff"/><circle cx="13.500" cy="13.500" r="11" fill="#1398d7"/><path d="M9 10q0-5 5-5t5 5q0 2-3 3.500-2 1-2 4M14 19.500v3" fill="none" stroke="#fff" stroke-width="3.200"/><circle cx="23.500" cy="19" r="6" fill="#f5aa20"/><path d="M23.500 17.500v5M23.500 14.500v2" stroke="#fff" stroke-width="2"/></svg>
    <svg class="people" width="19" height="20" viewBox="0 0 19 20"><g fill="none" stroke="#fff" stroke-width="1.400"><circle cx="13" cy="4.500" r="3.300"/><circle cx="6" cy="10.500" r="3.300"/><path d="M.8 19q0-5 5-5t5 5M10 9q8-2 8 5"/></g></svg>
    <svg class="chevron" width="17" height="10" viewBox="0 0 17 10"><path d="M.5 9l8-8 8 8" fill="none" stroke="#fff" stroke-width="1.400"/></svg>
    <svg class="battery" width="20" height="14" viewBox="0 0 20 14"><path d="M6 2.500h11.500v10H4.500V8M18.500 5.500v4M1 0v3h4V0M1 3q0 3 2 3t2-3M3 6v4" fill="none" stroke="#fff"/><path d="M6 4.500h7v6H6z" fill="#fff"/></svg>
    <svg class="volume" width="20" height="18" viewBox="0 0 20 18"><path d="M.5 6.500h3l4-4v13l-4-4h-3z" fill="none" stroke="#fff"/><path d="M10 7q1 2 0 4M13 5q3 4 0 8" fill="none" stroke="#fff"/><path d="M16 2q5 7 0 14" fill="none" stroke="#777"/></svg>
    <svg class="wifi" width="16" height="16" viewBox="0 0 16 16"><path d="M.5 15A14 14 0 0 1 15 1" fill="none" stroke="#777"/><path d="M3.500 15A11 11 0 0 1 15 5M7 15a8 8 0 0 1 8-6.500M10.500 15a4 4 0 0 1 4.500-3" fill="none" stroke="#fff" stroke-width="1.200"/><circle cx="13.500" cy="13.500" r="1.500" fill="#fff"/></svg>
    <div class="clock"><span>8:06 PM</span><span>6/19/2019</span></div>
    <div class="action-center"><svg width="20" height="20" viewBox="0 0 20 20"><path d="M0 0h20v16h-8l-4 4v-4H0z" fill="#fff"/><path d="M4 4.500h12M4 8h12M4 11.500h12" stroke="#101010"/></svg><b class="badge">3</b></div>
    <i class="show-desktop"></i>
  </div>
</footer>
</div>
</body>
</html>
```

FILE: styles.css
```css
* { box-sizing: border-box; }
body { margin: 0; overflow: hidden; font-family: "Liberation Sans", Arial, sans-serif; }
svg { display: block; flex: none; }
.screen { width: 1920px; height: 1080px; display: flex; flex-direction: column; overflow: hidden; }

/* browser frame */
.tabstrip { height: 42px; background: #dee1e6; display: flex; align-items: center; padding-left: 10px; flex: none; font-family: "Open Sans", "Noto Sans", sans-serif; }
.tab { position: relative; width: 300px; height: 42px; background: #fff; border-radius: 10px 10px 0 0; display: flex; align-items: center; padding: 0 14px 0 16px; }
.tab::before, .tab::after { content: ""; position: absolute; bottom: 0; width: 10px; height: 10px; }
.tab::before { left: -10px; background: radial-gradient(circle at 0 0, #dee1e6 9.500px, #fff 10px); }
.tab::after { right: -10px; background: radial-gradient(circle at 100% 0, #dee1e6 9.500px, #fff 10px); }
.tab-title { flex: 1; margin-left: 11px; padding-bottom: 2px; font-size: 14.500px; letter-spacing: -.3px; color: #45494d; }
.newtab { margin-left: 19px; }
.window-buttons { display: flex; gap: 43px; margin-left: auto; margin-right: 21px; padding-bottom: 5px; }
.toolbar { height: 47px; flex: none; display: flex; align-items: center; background: #fff; border-bottom: 1px solid #b0b3b1; padding: 0 25px 2px 19px; font-family: "Open Sans", "Noto Sans", sans-serif; }
.nav-icon { margin-right: 22px; }
.omnibox { width: 1554px; margin-left: -4px; height: 35px; border-radius: 18px; background: #f1f3f4; display: flex; align-items: center; padding: 0 14px; font-size: 17px; color: #202124; }
.scheme { color: #6b6f73; margin-left: 12px; width: 26px; letter-spacing: -.4px; }
.scheme-rule { width: 1px; height: 20px; background: #80868b; margin: 0 11px 0 9px; }
.url { letter-spacing: -.24px; white-space: nowrap; }
.star { margin-left: auto; }
.extensions { display: flex; align-items: center; gap: 20px; margin-left: 17.500px; }
.ext-rule { width: 1px; height: 20px; background: #c8cbce; margin: 0 -5px 0 -3px; }
.avatar { width: 25px; height: 25px; border-radius: 50%; background: #728d9b; color: #fff; font: 13px/25px Roboto, sans-serif; text-align: center; margin-right: 5px; }

/* application form */
.viewport { flex: 1; display: flex; min-height: 0; }
.page { width: 1899px; height: 941px; color: #fff; font-size: 20px; line-height: 23px; display: flex; flex-direction: column; overflow: hidden;
  background: #333 url("data:image/svg+xml,%3Csvg xmlns='http://www.w3.org/2000/svg' width='42.5' height='42.5' viewBox='0 0 34 34'%3E%3Cg fill='none' stroke='%233a3a3a'%3E%3Cpath stroke-width='.8' d='M-1 18L18-1M16-1L35 18M-1 16L18 35M35 16L16 35M-1 20L20-1M14-1L35 20M-1 14L20 35M35 14L14 35'/%3E%3Cpath stroke-width='3' stroke-linecap='round' d='M9 3l2 2M25 3l-2 2M3 9l2 2M31 9l-2 2M9 31l2-2M25 31l-2-2M3 25l2-2M31 25l-2-2M12.500 9.500l1 1M21.500 9.500l-1 1M12.500 24.500l1-1M21.500 24.500l-1-1'/%3E%3Cpath stroke='%23383838' d='M16 17h2M17 16v2M0 1V0h1M33 0h1v1M0 33v1h1M34 33v1h-1'/%3E%3C/g%3E%3C/svg%3E") 0 0 / 42.5px 42.5px; }
.title { margin: 0; font-size: 30px; line-height: 32px; height: 34px; }
.rule { margin: 0; width: 100%; height: 3px; border: 0; border-top: 1px solid #9a9a9a; border-bottom: 1px solid #eee; flex: none; }
.subtitle { margin: 0; font-size: 16.67px; line-height: 19px; }
.label { display: block; height: 23px; white-space: nowrap; }
.raised { line-height: 21px; }
input { display: block; height: 25px; padding: 1px 1px 1px 2px; margin: 0; border: 1px solid #a9a9a9; background: #fff; font: 16.5px "Liberation Sans", Arial, sans-serif; color: #000; border-radius: 0; }
input::placeholder { color: #757575; }
.w-std { width: 201px; }
.w-area { width: 81px; }
.w-part { width: 121px; }
.w-line { width: 1241px; }
.w-half { width: 641px; }
.fields { display: flex; }
.name-fields { gap: 6px; }
.phone-fields { gap: 5.500px; }
.personal { display: grid; grid-template-columns: 1080px 1fr; margin-top: 43px; padding-left: 2px; height: 233px; flex: none; }
.hints { display: flex; height: 23px; }
.name-hints { padding: 2px 0 0 86px; gap: 169px; height: 25px; }
.ssn { margin-top: 17px; }
.contact { padding-top: 14px; }
.phone { margin-top: 16px; }
.phone-hints { gap: 72px; }
.phone-hints span + span + span { margin-left: 45px; }
.address { display: flex; flex-direction: column; padding-left: 2px; flex: none; height: 151px; }
.spaced { margin-top: 3px; }
.address .label:first-child { height: 24px; }
.address .w-line { flex: none; }
.region { display: grid; grid-template-columns: 948px 1fr; padding-left: 2px; margin-top: 65px; height: 100px; flex: none; }
.after { margin-top: 2px; }

/* embedded map */
.map { position: relative; height: 293px; flex: none; font-family: Roboto, sans-serif; }
.road-edge { fill: none; stroke: #f3d27b; stroke-width: 11px; stroke-linejoin: round; }
.road-fill { fill: none; stroke: #ffeba1; stroke-width: 7.500px; stroke-linejoin: round; }
.place text { text-anchor: middle; paint-order: stroke; stroke: #f7f6f3; stroke-width: 7px; stroke-linejoin: round; }
.place .minor { font-size: 44px; fill: #626262; }
.place .town { font-size: 47px; fill: #444; }
.place .big { font-size: 50px; fill: #3c3c3c; }
.place .bn { font-family: Roboto, "Noto Sans Bengali", "Noto Sans", sans-serif; font-size: 48px; fill: #5d5d5d; }
.place .park text { font-size: 46px; fill: #2d8a35; stroke: #e0f3da; }
.shield { fill: #fbd935; stroke: #d9ab27; stroke-width: 1; }
.shield text { font: 500 12px Roboto, sans-serif; fill: #3f3510; stroke: none; text-anchor: middle; }
.national { fill: #6ba43e; }
.national text { font: 700 12px Roboto, sans-serif; fill: #fff; text-anchor: middle; }
.place-card { position: absolute; left: 13px; top: 13px; width: 443px; height: 115px; background: #fff; border-radius: 2px; box-shadow: 0 1px 4px rgba(0,0,0,.3); display: flex; padding: 12px 0 0 15px; font-size: 15px; line-height: 18px; }
.place-info { display: flex; flex-direction: column; width: 257px; }
.place-name { font-size: 17.500px; line-height: 22px; font-weight: 500; color: #000; }
.place-region { color: #5b5b5b; margin-top: 7px; letter-spacing: -.05px; }
.map-link { color: #4285d6; font-size: 15px; }
.larger { margin-top: 26px; letter-spacing: -.05px; }
.card-action { display: flex; flex-direction: column; align-items: center; height: 54px; justify-content: flex-end; }
.card-action svg { margin-bottom: 5px; }
.directions { width: 103px; padding-right: 9px; border-right: 1px solid #e6e6e6; }
.directions svg { margin-right: 3px; }
.directions, .save { padding-bottom: 2px; }
.save { width: 65px; }
.profile { position: absolute; left: 1852px; top: 13px; padding: 2px; background: #fff; border-radius: 2px; box-shadow: 0 1px 4px rgba(0,0,0,.3); }

.scrollbar { width: 21px; background: #f1f1f1; display: flex; flex-direction: column; align-items: center; padding: 9px 0 6px; }
.arrow-up, .arrow-down { border: 5px solid transparent; }
.arrow-up { border-top: 0; border-bottom-color: #a3a3a3; }
.arrow-down { border-bottom: 0; border-top-color: #505050; margin-top: auto; }
.thumb { width: 17px; height: 702px; background: #c1c1c1; margin-top: 7px; }

/* taskbar */
.taskbar { height: 50px; flex: none; background: #101010; display: flex; font-family: "Open Sans", "Noto Sans", sans-serif; color: #fff; }
.start { width: 60px; display: flex; align-items: center; justify-content: center; }
.search { width: 430px; background: #f2f2f2; border-top: 1px solid #b4b4b4; display: flex; align-items: center; padding: 0 19px 0 11px; color: #333; font-size: 17px; }
.search-text { margin-left: 11px; letter-spacing: -.25px; }
.mic { margin-left: auto; }
.apps { display: flex; padding-left: 1px; }
.app { width: 62px; height: 50px; display: flex; align-items: center; justify-content: center; border-bottom: 3px solid transparent; padding-top: 3px; }
.task-view { padding-right: 3px; }
.open { background: linear-gradient(#ffb3b3, #ffb3b3) center bottom / 51px 3px no-repeat border-box; }
.grouped { background: linear-gradient(90deg, #ffb3b3 40px, #c98f90 40px) center bottom / 51px 3px no-repeat border-box; }
.active { width: 61px; margin-left: 1px; padding-right: 2px; background: linear-gradient(#ffb3b3, #ffb3b3) center bottom / 61px 3px no-repeat border-box #333; }
.tray { margin-left: auto; display: flex; align-items: center; }
.people { margin-left: 25px; }
.chevron { margin-left: 28px; }
.battery { margin-left: 11px; }
.volume { margin-left: 10px; }
.wifi { margin-left: 13px; }
.clock { display: flex; flex-direction: column; align-items: center; width: 70px; margin-left: 13px; font-size: 15px; line-height: 23px; letter-spacing: -.35px; white-space: nowrap; }
.action-center { position: relative; margin-left: 22px; }
.badge { position: absolute; left: 9px; top: 9px; width: 21px; height: 21px; border-radius: 50%; background: #2c2c2c; border: 1px solid #777; font-size: 13px; line-height: 19px; text-align: center; }
.show-desktop { width: 6px; height: 50px; border-left: 1px solid #6b6b6b; margin-left: 25px; }
```
